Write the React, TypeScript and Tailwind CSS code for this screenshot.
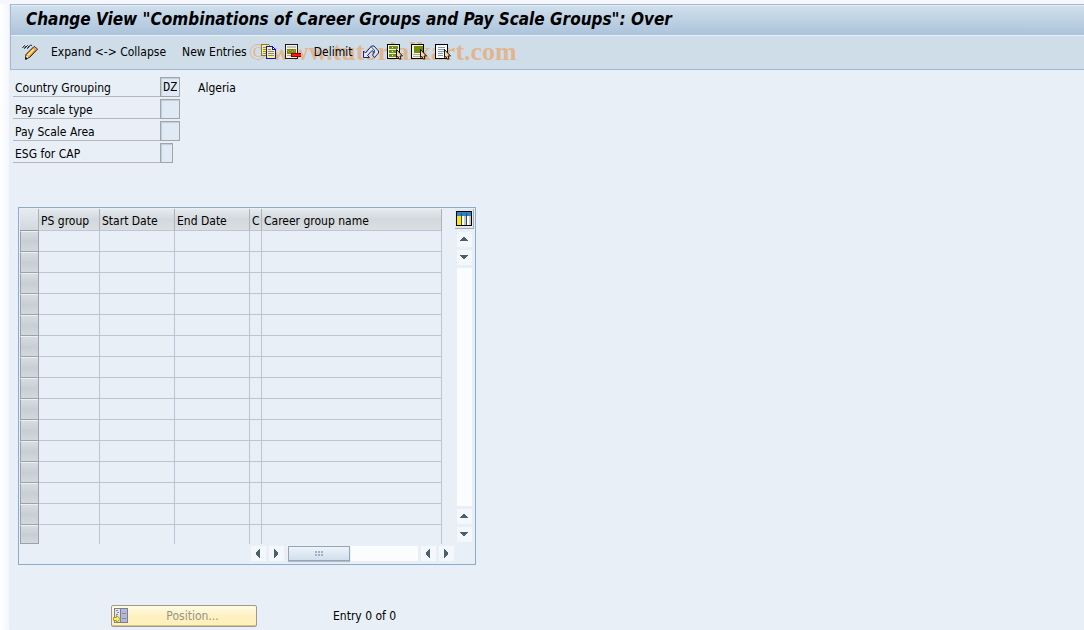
import React from 'react';

interface IconProps {
  children: React.ReactNode;
}

interface ArrowProps {
  direction: 'up' | 'down' | 'left' | 'right';
  label: string;
}

const Icon = ({ children }: IconProps) => (
  <svg
    viewBox="0 0 16 16"
    className="h-4 w-4 shrink-0"
    shapeRendering="crispEdges"
    aria-hidden="true"
  >
    {children}
  </svg>
);

const Cursor = () => (
  <path
    d="M9.5 5.5v8l1.500-1 1 2.500h2l-1-3h2.500z"
    fill="#fbd3a4"
    stroke="#000"
    strokeWidth="0.9"
    shapeRendering="auto"
  />
);

const PencilIcon = () => (
  <svg viewBox="0 0 16 16" className="h-4 w-4 shrink-0" aria-hidden="true">
    <path
      d="M0.5 4L2.5 1.5L3.5 2.5L2.5 4.5L5.5 1.5L6.5 2.5L5.5 4.5L8.5 1L10 1.5"
      fill="none"
      stroke="#222"
      strokeWidth="1"
    />
    <path d="M4 10.500L12 2.500L15.500 5L7.500 13.500L3.500 15z" fill="#f9a11f" stroke="#111" />
    <path d="M5 10.800L11 4.800L12.300 6L6.300 12z" fill="#ffe48a" />
    <path d="M11.300 4L12.500 3L15 5L13.500 6.300z" fill="#e3a596" />
    <path d="M4.300 11.500L6.500 13.300L4 14.500z" fill="#fff6e0" />
    <path d="M3 13.500h2v2h-2z" fill="#111" />
  </svg>
);

const CopyIcon = () => (
  <Icon>
    <path d="M0 0h8v1h1v11h-9z" fill="#77776a" />
    <path d="M1 1h7v10h-7z" fill="#ffee66" />
    <path d="M2 3h4v1h-4zM2 5h4v1h-4zM2 7h4v1h-4zM2 9h4v1h-4z" fill="#8c8c78" />
    <path d="M5 2h7v1h1v1h1v1h1v10h-10z" fill="#1010d0" />
    <path d="M6 3h5v3h3v8h-8z" fill="#fff27a" />
    <path d="M12 4h1v1h-1z" fill="#fff" />
    <path d="M7 5h3v1h-3zM7 7h6v1h-6zM7 9h6v1h-6zM7 11h6v1h-6z" fill="#8088a8" />
  </Icon>
);

const DeleteIcon = () => (
  <Icon>
    <path d="M0 0h13v15h-13z" fill="#1c1c1c" />
    <path d="M1 1h11v13h-11z" fill="#f4f4ee" />
    <path d="M2 2h9v2h-9z" fill="#c3c6ba" />
    <path d="M2 5h9v5h-9z" fill="#808a12" />
    <path d="M3 7h1v1h-1zM5 6h1v1h-1zM7 7h1v1h-1zM9 6h1v1h-1z" fill="#b4bc4a" />
    <path d="M2 11h4v1h-4z" fill="#a4a79a" />
    <path d="M6 9h10v4h-10z" fill="#8e0000" />
    <path d="M7 10h9v2h-9z" fill="#ff1c08" />
  </Icon>
);

const UndoIcon = () => (
  <svg viewBox="0 0 16 16" className="h-4 w-4 shrink-0" aria-hidden="true">
    <path
      d="M0.5 7v6.500h6L4.500 11.500L9 6.500L11.500 8.500L9.500 11L11.500 13.500L15.500 9V7L11 2H8.500L2.500 9z"
      fill="#dfe7f0"
      stroke="#1b2378"
      strokeWidth="1"
    />
    <path d="M8 2.500L12 7L9.500 9" fill="none" stroke="#1b2378" strokeWidth="0.800" />
  </svg>
);

const SelectAllIcon = () => (
  <Icon>
    <path d="M0 0h13v15h-13z" fill="#000" />
    <path d="M1 1h11v13h-11z" fill="#f2f4e6" />
    <path d="M2 2h9v3h-9zM2 6h9v3h-9zM2 10h9v3h-9z" fill="#6f9010" />
    <path d="M5 3h1v1h-1zM5 7h1v1h-1zM5 11h1v1h-1z" fill="#e6ecc0" />
    <Cursor />
  </Icon>
);

const SelectBlockIcon = () => (
  <Icon>
    <path d="M0 0h13v15h-13z" fill="#000" />
    <path d="M1 1h11v13h-11z" fill="#f2f4e6" />
    <path d="M3 2h9v7h-9z" fill="#748c04" />
    <path d="M2 10h7v1h-7zM2 12h7v1h-7z" fill="#a9ac9e" />
    <Cursor />
  </Icon>
);

const DeselectIcon = () => (
  <Icon>
    <path d="M0 0h13v15h-13z" fill="#000" />
    <path d="M1 1h11v13h-11z" fill="#f6f8fa" />
    <path d="M3 3h7v1h-7zM3 5h7v1h-7zM3 7h6v1h-6zM3 9h5v1h-5zM3 11h5v1h-5z" fill="#7f9cae" />
    <Cursor />
  </Icon>
);

const ColumnsIcon = () => (
  <Icon>
    <path d="M0 0h16v15h-16z" fill="#000" />
    <path d="M1 1h14v4h-14z" fill="#2a86c8" />
    <path d="M1 5h4v9h-4z" fill="#ffe800" />
    <path d="M6 5h4v9h-4zM11 5h4v9h-4z" fill="#fff" />
    <path d="M8 5h2v9h-2zM13 5h2v9h-2z" fill="#c9c9c9" />
    <path d="M5 2h1v12h-1zM10 2h1v12h-1z" fill="#3a4a55" />
  </Icon>
);

const PositionIcon = () => (
  <Icon>
    <path d="M1 0h14v15h-14z" fill="#7c7f92" />
    <path d="M2 1h5v13h-5z" fill="#e2e5ee" />
    <path d="M8 1h6v13h-6z" fill="#b4b8d4" />
    <path d="M3 2h2v1h-2zM4 4h2v1h-2zM3 6h2v1h-2zM9 5h4v1h-4zM9 10h4v1h-4z" fill="#868a9c" />
    <path
      d="M0.5 9.500h3v-2l4 3.500-4 3.500v-2h-3z"
      fill="#ffee4c"
      stroke="#a89a3c"
      shapeRendering="auto"
    />
  </Icon>
);

const arrows = {
  up: 'M6 5h2v1h1v1h1v1h1v1h-8v-1h1v-1h1v-1h1z',
  down: 'M3 5h8v1h-1v1h-1v1h-1v1h-2v-1h-1v-1h-1v-1h-1z',
  left: 'M8 3h1v9h-1v-1h-1v-1h-1v-1h-1v-3h1v-1h1v-1h1z',
  right: 'M5 3h1v1h1v1h1v1h1v3h-1v1h-1v1h-1v1h-1z',
};

const ScrollArrow = ({ direction, label }: ArrowProps) => (
  <button type="button" aria-label={label} className="block h-[15px] w-[15px] shrink-0 bg-[#f4f7fb]">
    <svg viewBox="0 0 15 15" className="h-[15px] w-[15px]" shapeRendering="crispEdges">
      <path d={arrows[direction]} fill="#4c5f6e" />
    </svg>
  </button>
);

const fields = [
  { id: 'country', label: 'Country Grouping', value: 'DZ', text: 'Algeria', narrow: false },
  { id: 'type', label: 'Pay scale type', value: '', text: '', narrow: false },
  { id: 'area', label: 'Pay Scale Area', value: '', text: '', narrow: false },
  { id: 'esg', label: 'ESG for CAP', value: '', text: '', narrow: true },
];

const columns = ['PS group', 'Start Date', 'End Date', 'C', 'Career group name'];

const rows = Array.from({ length: 15 }, (_, i) => i);

const Toolbar = () => (
  <div
    role="toolbar"
    className="relative flex h-[34px] items-center border-b border-[#a5b8d0] bg-[#cfdde8] pb-0.5 pl-[11px]"
  >
    <div className="pointer-events-none absolute top-0 left-[238px] flex items-center gap-1 font-['Liberation_Serif',serif] text-[26px] leading-8 text-[#e8a873]/75 select-none">
      <span className="text-2xl leading-8">©</span>
      <span className="font-bold">www.tutorialkart.com</span>
    </div>
    <div className="relative flex items-center">
      <button type="button" aria-label="Display/Change">
        <PencilIcon />
      </button>
      <button type="button" className="ml-[13px] whitespace-nowrap">
        Expand &lt;-&gt; Collapse
      </button>
      <button type="button" className="ml-4 whitespace-nowrap">
        New Entries
      </button>
      <div className="ml-3.5 flex gap-2">
        <button type="button" aria-label="Copy As">
          <CopyIcon />
        </button>
        <button type="button" aria-label="Delete">
          <DeleteIcon />
        </button>
      </div>
      <button type="button" className="ml-[13px]">
        Delimit
      </button>
      <div className="ml-[11px] flex gap-2">
        <button type="button" aria-label="Undo">
          <UndoIcon />
        </button>
        <button type="button" aria-label="Select All">
          <SelectAllIcon />
        </button>
        <button type="button" aria-label="Select Block">
          <SelectBlockIcon />
        </button>
        <button type="button" aria-label="Deselect All">
          <DeselectIcon />
        </button>
      </div>
    </div>
  </div>
);

const EntryTable = () => (
  <table className="w-[422px] table-fixed border-separate border-spacing-0">
    <colgroup>
      <col className="w-[19px]" />
      <col className="w-[61px]" />
      <col className="w-[75px]" />
      <col className="w-[75px]" />
      <col className="w-3" />
      <col className="w-[180px]" />
    </colgroup>
    <thead>
      <tr className="h-[22px]">
        <th
          aria-label="Row selection"
          className="border-r border-b border-r-[#a9b1b9] border-b-[#8f9aa6] bg-linear-to-b from-[#e6ebef] to-[#d2d8de] p-0"
        ></th>
        {columns.map((column) => (
          <th
            key={column}
            className="overflow-hidden border-r border-b border-r-[#a9b1b9] border-b-[#bcc5d4] bg-linear-to-b from-[#e6ebef] via-[#d3d8dd] to-[#dadfe3] p-0 pt-0.5 pl-0.5 text-left font-normal whitespace-nowrap"
          >
            {column}
          </th>
        ))}
      </tr>
    </thead>
    <tbody>
      {rows.map((row) => (
        <tr key={row} className="group h-[21px] last:h-[19px]">
          <td className="border-r border-b border-[#98a3b0] p-0">
            <button
              type="button"
              aria-label={`Select row ${row + 1}`}
              className="block h-5 w-[18px] border-t border-l border-t-[#edf0f3] border-l-[#98a3b0] bg-linear-to-b from-[#d8dce1] via-[#c9ced5] to-[#d3d8dd] group-last:h-[18px]"
            ></button>
          </td>
          {columns.map((column) => (
            <td
              key={column}
              className="border-r border-b border-[#bcc5d4] p-0 group-last:border-b-0"
            ></td>
          ))}
        </tr>
      ))}
    </tbody>
  </table>
);

const App = () => {
  return (
    <div className="flex min-h-screen flex-col bg-[#e8eff6] font-['DejaVu_Sans_Condensed','DejaVu_Sans',sans-serif] text-xs text-black">
      <div className="h-1 bg-[#f5f7fc]"></div>
      <div className="flex grow">
        <div className="w-[9px] shrink-0 bg-linear-to-r from-white to-[#f3f6fc]"></div>
        <main className="min-w-0 grow pl-px">
          <header className="border-t border-l border-[#a5b8d0]">
            <h1 className="flex h-[31px] items-center overflow-hidden border-t border-b border-t-[#e2ecf5] border-b-[#e6eff7] bg-linear-to-b from-[#d0dfeb] to-[#abc3db] pb-0.5 pl-[15px] text-[17px] font-bold whitespace-nowrap italic">
              Change View "Combinations of Career Groups and Pay Scale Groups": Over
            </h1>
            <Toolbar />
          </header>

          <form className="flex flex-col pt-[7px] pl-[3px]">
            {fields.map((field) => (
              <div key={field.id} className="flex h-[22px] items-start">
                <label
                  htmlFor={field.id}
                  className="h-5 w-[147px] border-b border-[#b4b8bc] pl-0.5 leading-[22px]"
                >
                  {field.label}
                </label>
                <input
                  id={field.id}
                  defaultValue={field.value}
                  className={
                    (field.narrow ? 'w-[13px]' : 'w-5') +
                    " h-5 border border-[#a0a5aa] bg-[#dfeaf4] px-0.5 pt-0.5 font-['Liberation_Mono',monospace] text-xs shadow-[inset_1px_1px_1px_#c3cdd7]"
                  }
                />
                <span className="pl-[18px] leading-[22px]">{field.text}</span>
              </div>
            ))}
          </form>

          <section className="mt-[42px] ml-2 flex h-[358px] w-[458px] flex-col border border-[#8badcb] pt-px pl-px">
            <div className="flex">
              <EntryTable />
              <div className="ml-[13px] flex flex-col items-center gap-[3px] pb-0.5">
                <button
                  type="button"
                  aria-label="Configuration"
                  className="flex h-5 w-[19px] items-center justify-center border-r border-b border-[#a4abb2] bg-[#e3e8ec]"
                >
                  <ColumnsIcon />
                </button>
                <ScrollArrow direction="up" label="Scroll up" />
                <ScrollArrow direction="down" label="Scroll down" />
                <div className="w-[15px] grow bg-[#fbfcfd]"></div>
                <ScrollArrow direction="up" label="Previous line" />
                <ScrollArrow direction="down" label="Next line" />
              </div>
            </div>
            <div className="mt-0.5 flex gap-[3px] pl-[231px]">
              <ScrollArrow direction="left" label="Scroll left" />
              <ScrollArrow direction="right" label="Scroll right" />
              <div className="flex w-[131px] bg-[#fbfcfd] pl-px">
                <div className="flex h-[15px] w-[62px] items-center justify-center border border-[#93a5b8] bg-linear-to-b from-[#edf3f9] to-[#d1dfeb] shadow-[0_1px_1px_#b5bec8]">
                  <div className="grid grid-cols-3 gap-px">
                    {[0, 1, 2, 3, 4, 5].map((dot) => (
                      <div key={dot} className="h-0.5 w-0.5 bg-[#a0b2c3]"></div>
                    ))}
                  </div>
                </div>
              </div>
              <ScrollArrow direction="left" label="Previous column" />
              <ScrollArrow direction="right" label="Next column" />
            </div>
          </section>

          <div className="mt-10 ml-[101px] flex items-center">
            <button
              type="button"
              className="flex h-[22px] w-[146px] items-center rounded-xs border border-[#9c9a92] bg-linear-to-b from-[#fffbe6] via-[#fff1c0] to-[#fff0bc] pl-px text-[#96948c] shadow-[inset_0_-1px_0_#d8c583]"
            >
              <PositionIcon />
              <span className="grow text-center">Position...</span>
            </button>
            <span className="pl-[76px]">Entry 0 of 0</span>
          </div>
        </main>
      </div>
    </div>
  );
};

export default App;
